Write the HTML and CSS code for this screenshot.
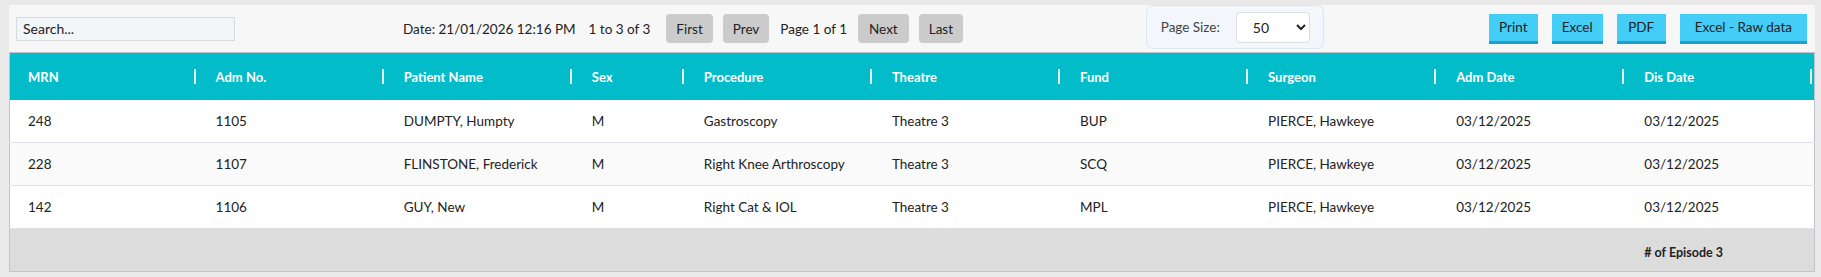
FILE: index.html
```html
<!DOCTYPE html>
<html lang="en">
<head>
    <meta charset="UTF-8">
    <meta name="viewport" content="width=device-width, initial-scale=1.0">
    <title>Episodes</title>
    <link rel="stylesheet" href="styles.css">
</head>
<body>
    <div class="report">
        <div class="toolbar">
            <input type="text" class="search" placeholder="Search...">

            <div class="pager">
                <span class="date">Date: 21/01/2026 12:16 PM</span>
                <span class="count">1 to 3 of 3</span>
                <button class="nav">First</button>
                <button class="nav">Prev</button>
                <span class="page">Page 1 of 1</span>
                <button class="nav">Next</button>
                <button class="nav">Last</button>
            </div>

            <div class="page-size">
                <label for="size">Page Size:</label>
                <select id="size">
                    <option>10</option>
                    <option>25</option>
                    <option selected>50</option>
                    <option>100</option>
                </select>
            </div>

            <div class="exports">
                <button class="export">Print</button>
                <button class="export">Excel</button>
                <button class="export">PDF</button>
                <button class="export raw">Excel - Raw data</button>
            </div>
        </div>

        <table class="grid">
            <colgroup>
                <col class="wide"><col class="wide"><col class="wide"><col class="narrow">
                <col class="wide"><col class="wide"><col class="wide"><col class="wide">
                <col class="wide"><col class="wide">
            </colgroup>
            <thead>
                <tr>
                    <th><div class="th"><span>MRN</span><i class="grip"></i></div></th>
                    <th><div class="th"><span>Adm No.</span><i class="grip"></i></div></th>
                    <th><div class="th"><span>Patient Name</span><i class="grip"></i></div></th>
                    <th><div class="th"><span>Sex</span><i class="grip"></i></div></th>
                    <th><div class="th"><span>Procedure</span><i class="grip"></i></div></th>
                    <th><div class="th"><span>Theatre</span><i class="grip"></i></div></th>
                    <th><div class="th"><span>Fund</span><i class="grip"></i></div></th>
                    <th><div class="th"><span>Surgeon</span><i class="grip"></i></div></th>
                    <th><div class="th"><span>Adm Date</span><i class="grip"></i></div></th>
                    <th><div class="th"><span>Dis Date</span><i class="grip"></i></div></th>
                </tr>
            </thead>
            <tbody>
                <tr>
                    <td>248</td><td>1105</td><td>DUMPTY, Humpty</td><td>M</td><td>Gastroscopy</td>
                    <td>Theatre 3</td><td>BUP</td><td>PIERCE, Hawkeye</td><td>03/12/2025</td><td>03/12/2025</td>
                </tr>
                <tr>
                    <td>228</td><td>1107</td><td>FLINSTONE, Frederick</td><td>M</td><td>Right Knee Arthroscopy</td>
                    <td>Theatre 3</td><td>SCQ</td><td>PIERCE, Hawkeye</td><td>03/12/2025</td><td>03/12/2025</td>
                </tr>
                <tr>
                    <td>142</td><td>1106</td><td>GUY, New</td><td>M</td><td>Right Cat &amp; IOL</td>
                    <td>Theatre 3</td><td>MPL</td><td>PIERCE, Hawkeye</td><td>03/12/2025</td><td>03/12/2025</td>
                </tr>
            </tbody>
            <tfoot>
                <tr>
                    <td colspan="9"></td>
                    <td class="total"># of Episode 3</td>
                </tr>
            </tfoot>
        </table>
    </div>
</body>
</html>
```

FILE: styles.css
```css
body {
    font-family: Lato, "Noto Sans", sans-serif;
    font-size: 13.5px;
    background-color: #e9e9e9;
    color: #222;
    margin: 0;
    padding: 5px 7px 0 9px;
}

.report {
    width: 1806px;
}

/* toolbar */
.toolbar {
    display: flex;
    align-items: center;
    height: 47px;
    background: #f7f7f7;
    box-sizing: border-box;
}

.search {
    width: 219px;
    height: 24px;
    margin-left: 7px;
    padding: 0 6px;
    border: 1px solid #d6dbe0;
    background: #f3f6f9;
    font-family: inherit;
    font-size: 14px;
    color: #222;
    box-sizing: border-box;
}

.search::placeholder {
    color: #222;
}

.pager {
    display: flex;
    align-items: center;
    margin-left: 168px;
}

.count {
    margin-left: 13px;
}

.page {
    margin: 0 11px;
}

.nav {
    height: 29px;
    padding: 0 10px;
    margin-left: 10px;
    border: none;
    border-radius: 4px;
    background: #cbcbcb;
    color: #222;
    font-family: inherit;
    font-size: 13.5px;
}

.count + .nav {
    margin-left: 16px;
}

.pager .page + .nav {
    margin-left: 0;
    padding: 0 11px;
}

.page-size {
    display: flex;
    align-items: center;
    align-self: flex-start;
    height: 44px;
    margin-left: auto;
    padding: 0 13px 0 14px;
    background: #f3f6fb;
    border: 1px solid #dde5f0;
    border-radius: 7px;
    box-sizing: border-box;
}

.page-size label {
    color: #444;
    margin-right: 16px;
}

.page-size select {
    width: 74px;
    height: 31px;
    padding: 0 8px 0 12px;
    border: 1px solid #dde0e4;
    border-radius: 4px;
    background: #fff;
    font-family: inherit;
    font-size: 14px;
    color: #222;
}

.exports {
    display: flex;
    margin-left: 165px;
    margin-right: 8px;
    gap: 14px;
}

.export {
    min-width: 49px;
    height: 30px;
    padding: 0 10px;
    border: none;
    border-bottom: 3px solid #1c9fcb;
    background: #44cdf7;
    color: #222;
    font-family: inherit;
    font-size: 13.5px;
}

.export.raw {
    padding: 0 15px;
}

/* grid */
.grid {
    width: 1806px;
    table-layout: fixed;
    border-collapse: collapse;
    border: 1px solid #bfc5d0;
}

col.wide {
    width: 188px;
}

col.narrow {
    width: 112px;
}

.grid th {
    height: 47px;
    padding: 0 2px 0 18px;
    background: #02bdc9;
    color: #fff;
    font-size: 13px;
    font-weight: bold;
    text-align: left;
}

.th {
    display: flex;
    align-items: center;
    justify-content: space-between;
}

.grip {
    width: 2px;
    height: 15px;
    background: #e6eef0;
}

.grid td {
    height: 42px;
    padding: 0 0 0 18px;
    border-bottom: 1px solid #dde0e6;
    background: #fff;
    white-space: nowrap;
}

.grid tbody tr:nth-child(2) td {
    background: #fafafa;
}

.grid tfoot td {
    height: 38px;
    background: #dcdcdc;
    border-top: 1px solid #bfc5d0;
    border-bottom: none;
    vertical-align: middle;
    padding-top: 4px;
}

.grid .total {
    font-size: 12.5px;
    font-weight: bold;
}
```
